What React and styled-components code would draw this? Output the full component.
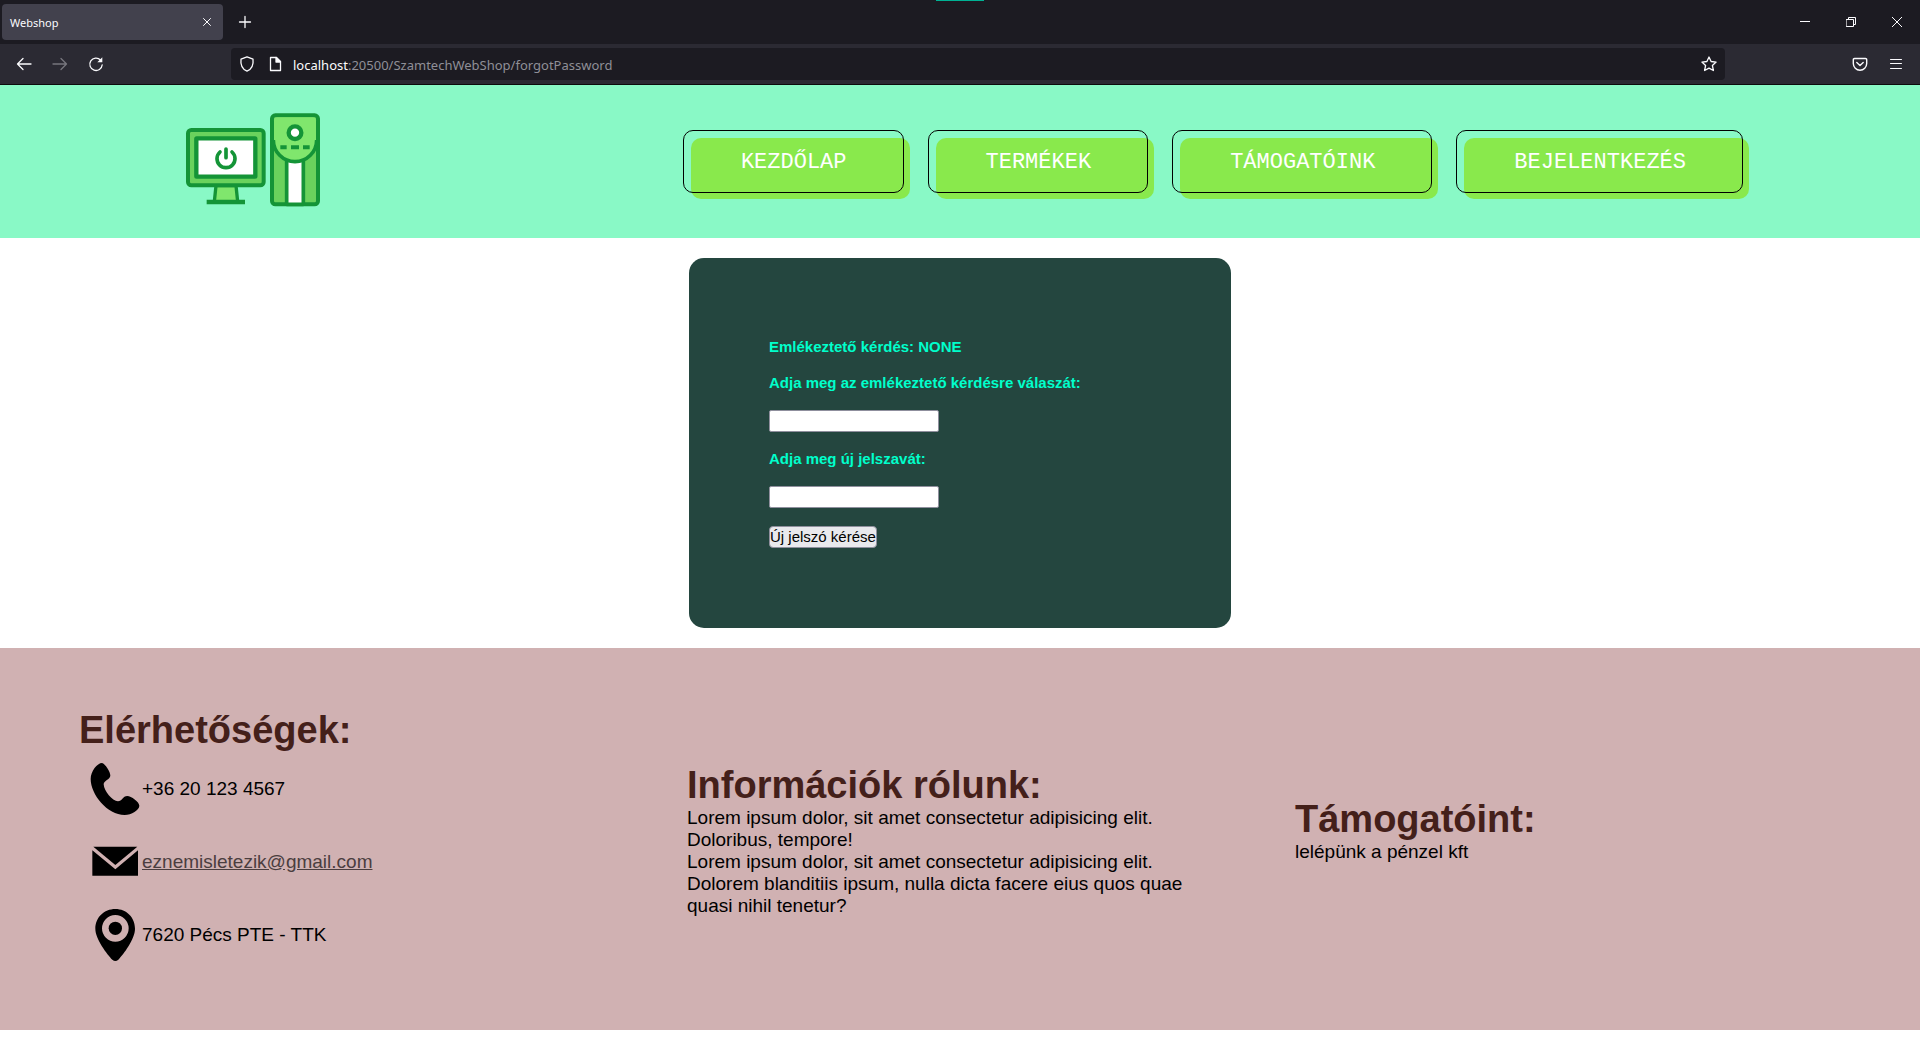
import React from "react";
import styled, { createGlobalStyle } from "styled-components";

const GlobalStyle = createGlobalStyle`
  *, *::before, *::after { box-sizing: border-box; }
  body {
    margin: 0;
    background: #fff;
    color: #000;
    font-family: "Liberation Sans", Arial, sans-serif;
  }
  h2, p, ul, address { margin: 0; padding: 0; font-style: normal; }
`;

/* ---------- browser window ---------- */

const Chrome = styled.div`
  position: relative;
  background: #2b2a33;
  border-bottom: 1px solid #0c0c0d;
  color: #fbfbfe;
  font-family: "Noto Sans", "Open Sans", sans-serif;
`;

const TopMark = styled.span`
  position: absolute;
  top: 0;
  left: 50%;
  width: 48px;
  height: 1px;
  margin-left: -24px;
  background: #00b294;
`;

const TabStrip = styled.div`
  display: flex;
  align-items: center;
  height: 44px;
  padding-left: 2px;
  background: #1c1b22;
`;

const Tab = styled.div`
  display: flex;
  align-items: center;
  justify-content: space-between;
  width: 221px;
  height: 36px;
  padding: 0 4px 0 8px;
  border-radius: 4px;
  background: #42414d;
  font-size: 11px;
`;

const IconButton = styled.button`
  display: flex;
  align-items: center;
  justify-content: center;
  width: ${(p) => p.$width || 36}px;
  height: ${(p) => p.$height || 32}px;
  padding: 0;
  border: 0;
  background: none;
  color: ${(p) => (p.$dim ? "#77767e" : "#fbfbfe")};
`;

const WindowControls = styled.div`
  display: flex;
  margin-left: auto;
`;

const Toolbar = styled.div`
  display: flex;
  align-items: center;
  height: 40px;
  padding: 0 6px;
`;

const AddressBar = styled.div`
  display: flex;
  flex: 1;
  align-items: center;
  height: 32px;
  margin: 0 117px;
  padding: 0 0 0 2px;
  border-radius: 4px;
  background: #1c1b22;
`;

const Url = styled.div`
  flex: 1;
  padding: 2px 0 0 4px;
  color: #8f8f97;
  font-size: 13px;
  line-height: 20px;
`;

const Host = styled.span`
  color: #fbfbfe;
`;

const Glyph = ({ size = 16, width = 1.3, children }) => (
  <svg
    width={size}
    height={size}
    viewBox={`0 0 ${size} ${size}`}
    fill="none"
    stroke="currentColor"
    strokeWidth={width}
    strokeLinecap="round"
    strokeLinejoin="round"
    aria-hidden="true"
  >
    {children}
  </svg>
);

const BrowserChrome = () => (
  <Chrome>
    <TopMark />
    <TabStrip>
      <Tab>
        Webshop
        <IconButton $width={24} $height={24} aria-label="Close tab">
          <Glyph width={1}><path d="M4.500 4.500l7 7M11.500 4.500l-7 7" /></Glyph>
        </IconButton>
      </Tab>
      <IconButton $width={44} aria-label="New tab">
        <Glyph><path d="M8 2.500v11M2.500 8h11" /></Glyph>
      </IconButton>
      <WindowControls>
        <IconButton $width={46} aria-label="Minimize">
          <Glyph size={10} width={1}><path d="M0 4.500h10" /></Glyph>
        </IconButton>
        <IconButton $width={46} aria-label="Restore">
          <Glyph size={10} width={1}><path d="M.5 2.500h7v7h-7zM2.500 2.500v-2h7v7h-2" strokeLinejoin="miter" /></Glyph>
        </IconButton>
        <IconButton $width={46} aria-label="Close">
          <Glyph size={10} width={1}><path d="M0 0l10 10M10 0L0 10" /></Glyph>
        </IconButton>
      </WindowControls>
    </TabStrip>
    <Toolbar>
      <IconButton aria-label="Back">
        <Glyph><path d="M15 8H1.500M7 2.500L1.500 8 7 13.500" /></Glyph>
      </IconButton>
      <IconButton $dim aria-label="Forward">
        <Glyph><path d="M1 8h13.500M9 2.500L14.500 8 9 13.500" /></Glyph>
      </IconButton>
      <IconButton aria-label="Reload">
        <Glyph>
          <path d="M12.500 4A6.200 6.200 0 1 0 14.200 8.800" />
          <path d="M14.300 1.300v5h-5z" fill="currentColor" stroke="none" />
        </Glyph>
      </IconButton>
      <AddressBar>
        <IconButton $width={28} aria-label="Tracking protection">
          <Glyph><path d="M8 .8l6 2.400c.6 5-1 10-6 12-5-2-6.600-7-6-12z" /></Glyph>
        </IconButton>
        <IconButton $width={28} aria-label="Site information">
          <Glyph>
            <path d="M3.500 1.500h6l4 4v9h-10z" />
            <path d="M9 1.500v4.500h4.500z" fill="currentColor" />
          </Glyph>
        </IconButton>
        <Url><Host>localhost</Host>:20500/SzamtechWebShop/forgotPassword</Url>
        <IconButton $width={32} aria-label="Bookmark">
          <Glyph><path d="M8 1l2.100 4.500 5 .6-3.700 3.400 1 5L8 12.100l-4.400 2.400 1-5L.9 6.100l5-.6z" /></Glyph>
        </IconButton>
      </AddressBar>
      <IconButton aria-label="Pocket">
        <Glyph width={1.4}>
          <path d="M2.500 2.500h11a1.200 1.200 0 0 1 1.200 1.200V7.500a6.700 6.700 0 0 1-13.400 0V3.700a1.200 1.200 0 0 1 1.200-1.200z" />
          <path d="M4.800 6.500L8 9.500l3.200-3" />
        </Glyph>
      </IconButton>
      <IconButton aria-label="Menu">
        <Glyph width={1}><path d="M2.500 3.500h11M2.500 7.500h11M2.500 12.500h11" /></Glyph>
      </IconButton>
    </Toolbar>
  </Chrome>
);

/* ---------- page header ---------- */

const Header = styled.header`
  display: flex;
  justify-content: space-between;
  padding: 28px 171px 31px 186px;
  background: #89f9c6;
`;

const Nav = styled.nav`
  display: flex;
  align-items: flex-start;
  gap: 26px;
  padding-top: 25px;
`;

const NavLink = styled.a`
  position: relative;
  padding: 12px 63px 24px 50px;
  border-radius: 10px;
  background: #89e94c;
  color: #fff;
  font-family: "Liberation Mono", "Courier New", monospace;
  font-size: 22px;
  line-height: 25px;
  text-decoration: none;
  white-space: nowrap;

  &::before {
    content: "";
    position: absolute;
    inset: -8px 6px 6px -8px;
    border: 1px solid #000;
    border-radius: 10px;
  }
`;

const Logo = () => (
  <svg width="134" height="94" viewBox="78 68 402 282" role="img" aria-label="Webshop">
    <g stroke="#149437" strokeLinejoin="round">
      <path d="M168 286h60l5 48h-70z" fill="#80e66d" strokeWidth="10" />
      <rect x="84" y="119" width="227" height="166" rx="10" fill="#6ad25d" strokeWidth="12" />
      <rect x="109" y="144" width="177" height="115" rx="1" fill="#fff" strokeWidth="13" />
      <path d="M140 335h115" strokeWidth="13" fill="none" />
      <path d="M180 185a27 27 0 1 0 36 0M198 176v26" fill="none" strokeWidth="11" strokeLinecap="round" />
      <rect x="336" y="75" width="138" height="267" rx="10" fill="#6ad25d" strokeWidth="12" />
      <rect x="380" y="206" width="50" height="136" fill="#fff" strokeWidth="11" />
      <path d="M342 90q0-9 9-9h108q9 0 9 9v59a63 65 0 0 1-126 0z" fill="#80e66d" stroke="none" />
      <path d="M340 149a65 65 0 0 0 130 0" fill="none" strokeWidth="11" />
      <circle cx="405" cy="127" r="19" fill="#fff" strokeWidth="13" />
      <path d="M361 171h19M393 171h24M429 171h20" fill="none" strokeWidth="12" />
    </g>
  </svg>
);

/* ---------- form ---------- */

const Main = styled.main`
  display: flex;
  justify-content: center;
  padding: 20px;
`;

const Form = styled.form`
  display: flex;
  flex-direction: column;
  align-items: flex-start;
  gap: 18px;
  width: 542px;
  padding: 80px;
  border-radius: 15px;
  background: #24463f;
  color: #00ffcb;
  font-size: 15px;
  font-weight: bold;
  line-height: 18px;
`;

const TextInput = styled.input`
  width: 170px;
  height: 22px;
  padding: 1px 2px;
  border: 1px solid #8f8f9d;
  border-radius: 2px;
  background: #fff;
`;

const Submit = styled.button`
  height: 22px;
  padding: 0;
  border: 1px solid #8f8f9d;
  border-radius: 4px;
  background: #e9e9ed;
  color: #000;
  font-family: inherit;
  font-size: 15px;
  line-height: 18px;
`;

/* ---------- footer ---------- */

const Footer = styled.footer`
  display: grid;
  grid-template-columns: repeat(3, 1fr);
  align-items: center;
  padding: 60px 48px 59px;
  background: #d0b1b2;
  font-size: 19px;
  line-height: 22px;
`;

const Column = styled.section`
  padding: 0 40px ${(p) => (p.$spaced ? 20 : 0)}px 31px;
`;

const Title = styled.h2`
  color: #44201a;
  font-size: 38px;
  line-height: 44px;
`;

const Contact = styled.div`
  display: flex;
  align-items: center;
  height: 73px;
  padding-left: 9px;
`;

const MailLink = styled.a`
  color: #4b3e3f;
`;

const ContactIcon = ({ top, children }) => (
  <svg width="54" height="54" viewBox={`82 ${top} 162 162`} aria-hidden="true">
    {children}
  </svg>
);

export default function App() {
  return (
    <>
      <GlobalStyle />
      <BrowserChrome />
      <Header>
        <Logo />
        <Nav>
          <NavLink href="#kezdolap">KEZDŐLAP</NavLink>
          <NavLink href="#termekek">TERMÉKEK</NavLink>
          <NavLink href="#tamogatoink">TÁMOGATÓINK</NavLink>
          <NavLink href="#bejelentkezes">BEJELENTKEZÉS</NavLink>
        </Nav>
      </Header>
      <Main>
        <Form onSubmit={(e) => e.preventDefault()}>
          <p>Emlékeztető kérdés: NONE</p>
          <label htmlFor="answer">Adja meg az emlékeztető kérdésre válaszát:</label>
          <TextInput id="answer" type="text" />
          <label htmlFor="password">Adja meg új jelszavát:</label>
          <TextInput id="password" type="password" />
          <Submit type="submit">Új jelszó kérése</Submit>
        </Form>
      </Main>
      <Footer>
        <Column>
          <Title>Elérhetőségek:</Title>
          <Contact>
            <ContactIcon top={213}>
              <path d="M124 216C133 217 150 244 149 254C148 266 129 268 129 280C130 300 155 330 172 331C184 331 186 315 200 315C211 315 236 333 236 344C236 357 212 372 192 372C140 372 90 310 90 264C90 240 110 216 124 216Z" />
            </ContactIcon>
            +36 20 123 4567
          </Contact>
          <Contact>
            <ContactIcon top={433}>
              <path d="M98 468H230L164 523Z" />
              <path d="M95 479L164 536L232 479V555H95Z" />
            </ContactIcon>
            <MailLink href="mailto:eznemisletezik@gmail.com">eznemisletezik@gmail.com</MailLink>
          </Contact>
          <Contact>
            <ContactIcon top={651}>
              <path
                fillRule="evenodd"
                d="M164 654C198 654 223 680 223 713C223 745 188 790 173 806Q164 814 155 806C140 790 104 745 104 713C104 680 130 654 164 654ZM164 672A40 40 0 1 0 164 752A40 40 0 1 0 164 672Z"
              />
              <circle cx="164" cy="712" r="20" />
            </ContactIcon>
            <address>7620 Pécs PTE - TTK</address>
          </Contact>
        </Column>
        <Column>
          <Title>Információk rólunk:</Title>
          <p>Lorem ipsum dolor, sit amet consectetur adipisicing elit. Doloribus, tempore!</p>
          <p>
            Lorem ipsum dolor, sit amet consectetur adipisicing elit. Dolorem blanditiis
            ipsum, nulla dicta facere eius quos quae quasi nihil tenetur?
          </p>
        </Column>
        <Column $spaced>
          <Title>Támogatóint:</Title>
          <p>lelépünk a pénzel kft</p>
        </Column>
      </Footer>
    </>
  );
}
